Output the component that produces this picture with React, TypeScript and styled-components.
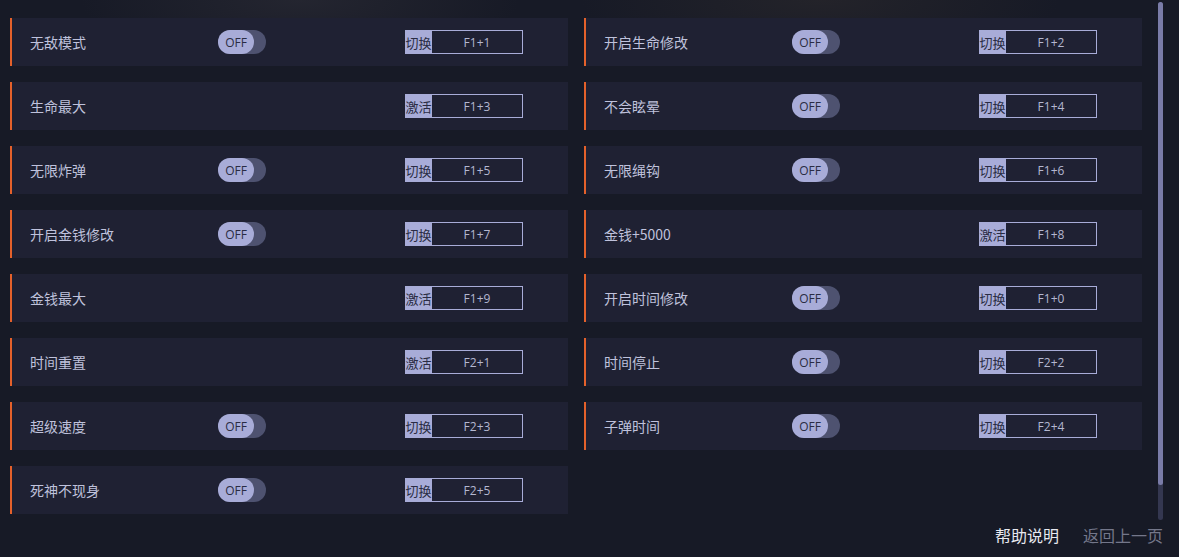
import React from 'react';
import styled, {createGlobalStyle} from 'styled-components';

type Cheat = {
  name: string;
  toggle: boolean;
  hotkey: string;
};

const left: Cheat[] = [
  {name: '无敌模式', toggle: true, hotkey: 'F1+1'},
  {name: '生命最大', toggle: false, hotkey: 'F1+3'},
  {name: '无限炸弹', toggle: true, hotkey: 'F1+5'},
  {name: '开启金钱修改', toggle: true, hotkey: 'F1+7'},
  {name: '金钱最大', toggle: false, hotkey: 'F1+9'},
  {name: '时间重置', toggle: false, hotkey: 'F2+1'},
  {name: '超级速度', toggle: true, hotkey: 'F2+3'},
  {name: '死神不现身', toggle: true, hotkey: 'F2+5'},
];
const right: Cheat[] = [
  {name: '开启生命修改', toggle: true, hotkey: 'F1+2'},
  {name: '不会眩晕', toggle: true, hotkey: 'F1+4'},
  {name: '无限绳钩', toggle: true, hotkey: 'F1+6'},
  {name: '金钱+5000', toggle: false, hotkey: 'F1+8'},
  {name: '开启时间修改', toggle: true, hotkey: 'F1+0'},
  {name: '时间停止', toggle: true, hotkey: 'F2+2'},
  {name: '子弹时间', toggle: true, hotkey: 'F2+4'},
];

const GlobalStyle = createGlobalStyle`
  html, body {
    margin: 0;
    padding: 0;
    background: #171a26;
  }
  body {
    font-family: "Noto Sans CJK SC", "Noto Sans", sans-serif;
  }
`;

const Root = styled.div`
  position: relative;
  width: 1179px;
  height: 557px;
  overflow: hidden;
  background:
    radial-gradient(ellipse 220px 60px at 300px 0px, rgba(60, 58, 66, 0.35), transparent),
    radial-gradient(ellipse 240px 60px at 820px 0px, rgba(64, 56, 50, 0.3), transparent),
    #171a26;
  display: flex;
  flex-direction: column;
`;
const Columns = styled.div`
  display: grid;
  grid-template-columns: 558px 558px;
  column-gap: 16px;
  align-items: start;
  padding: 18px 0 0 10px;
`;
const Column = styled.div`
  display: flex;
  flex-direction: column;
  gap: 16px;
`;
const Row = styled.div`
  height: 48px;
  box-sizing: border-box;
  border-left: 2px solid #e4612b;
  background: #1f2133;
  padding-left: 18px;
  display: grid;
  grid-template-columns: 188px 187px 118px;
  align-items: center;
`;
const Name = styled.div`
  font-size: 14px;
  color: #bfc2dc;
`;
const Toggle = styled.div`
  width: 48px;
  height: 24px;
  border-radius: 12px;
  background: #4e5270;
  display: flex;
`;
const Knob = styled.div`
  width: 36px;
  height: 24px;
  border-radius: 12px;
  background: #a8acd8;
  color: #2a2c44;
  font-size: 12px;
  font-family: "Open Sans", "Noto Sans", sans-serif;
  display: flex;
  align-items: center;
  justify-content: center;
`;
const Key = styled.div`
  display: flex;
  height: 24px;
`;
const KeyLabel = styled.div`
  width: 27px;
  background: #a8acd8;
  color: #2a2c44;
  font-size: 13px;
  display: flex;
  align-items: center;
  justify-content: center;
`;
const KeyValue = styled.div`
  flex: 1;
  box-sizing: border-box;
  border: 1px solid #a8acd8;
  border-left: none;
  color: #b4b7d0;
  font-size: 12px;
  font-family: "Open Sans", "Noto Sans", sans-serif;
  display: flex;
  align-items: center;
  justify-content: center;
`;
const Footer = styled.div`
  margin-top: auto;
  display: flex;
  justify-content: flex-end;
  gap: 24px;
  padding: 0 16px 10px 0;
  font-size: 16px;
`;
const FooterLink = styled.div`
  color: ${({muted}: {muted?: boolean}) => muted ? '#74778a' : '#e8e9f0'};
`;
const ScrollTrack = styled.div`
  position: absolute;
  left: 1158px;
  top: 2px;
  width: 5px;
  height: 518px;
  border-radius: 3px;
  background: #343750;
`;
const ScrollThumb = styled.div`
  width: 5px;
  height: 483px;
  border-radius: 3px;
  background: #7a7ca8;
`;

function CheatRow({cheat}: {cheat: Cheat}) {
  return (
    <Row>
      <Name>{cheat.name}</Name>
      <div>
        {cheat.toggle &&
          <Toggle>
            <Knob>OFF</Knob>
          </Toggle>
        }
      </div>
      <Key>
        <KeyLabel>{cheat.toggle ? '切换' : '激活'}</KeyLabel>
        <KeyValue>{cheat.hotkey}</KeyValue>
      </Key>
    </Row>
  );
}

export default function App() {
  return (
    <Root>
      <GlobalStyle/>
      <Columns>
        <Column>
          {left.map(c => <CheatRow key={c.name} cheat={c}/>)}
        </Column>
        <Column>
          {right.map(c => <CheatRow key={c.name} cheat={c}/>)}
        </Column>
      </Columns>
      <Footer>
        <FooterLink>帮助说明</FooterLink>
        <FooterLink muted>返回上一页</FooterLink>
      </Footer>
      <ScrollTrack>
        <ScrollThumb/>
      </ScrollTrack>
    </Root>
  );
}
